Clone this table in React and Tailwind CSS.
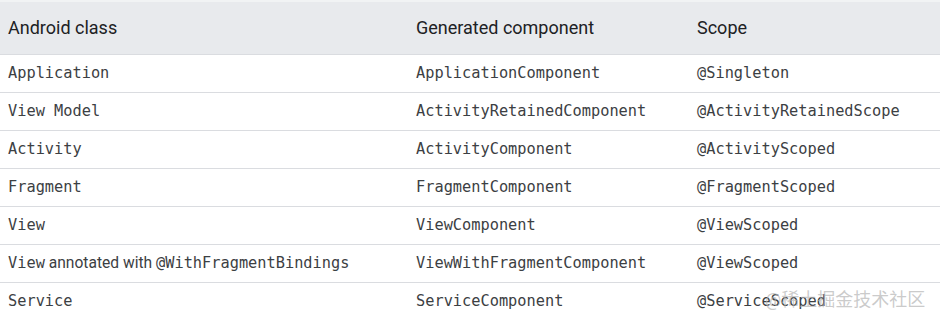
const rows = [
  { cls: "Application", comp: "ApplicationComponent", scope: "@Singleton" },
  { cls: "View Model", comp: "ActivityRetainedComponent", scope: "@ActivityRetainedScope" },
  { cls: "Activity", comp: "ActivityComponent", scope: "@ActivityScoped" },
  { cls: "Fragment", comp: "FragmentComponent", scope: "@FragmentScoped" },
  { cls: "View", comp: "ViewComponent", scope: "@ViewScoped" },
  { cls: "annotated", comp: "ViewWithFragmentComponent", scope: "@ViewScoped" },
  { cls: "Service", comp: "ServiceComponent", scope: "@ServiceScoped" },
];

const mono = "font-['DejaVu_Sans_Mono',monospace] text-[15.3px] text-[#3c4043]";

export default function App() {
  return (
    <div className="relative w-[940px] h-[320px] bg-white font-['Roboto',sans-serif] overflow-hidden">
      <table className="w-full border-collapse">
        <thead>
          <tr className="h-[53px] bg-[#e8eaed] border-t-2 border-[#f1f3f4] border-b border-b-[#dadce0]">
            <th className="w-[408px] pl-2 text-left font-normal text-[18px] text-[#202124]">Android class</th>
            <th className="w-[281px] pl-2 text-left font-normal text-[18px] text-[#202124]">Generated component</th>
            <th className="pl-2 text-left font-normal text-[18px] text-[#202124]">Scope</th>
          </tr>
        </thead>
        <tbody>
          {rows.map((r, i) => (
            <tr key={i} className="h-[38px] border-b border-[#dadce0]">
              <td className="pl-2">
                {r.cls === "annotated" ? (
                  <span className="text-[15.6px] text-[#3c4043]">
                    <span className={mono}>View</span> annotated with{" "}
                    <span className={mono}>@WithFragmentBindings</span>
                  </span>
                ) : (
                  <span className={mono}>{r.cls}</span>
                )}
              </td>
              <td className="pl-2">
                <span className={mono}>{r.comp}</span>
              </td>
              <td className="pl-2">
                <span className={mono}>{r.scope}</span>
              </td>
            </tr>
          ))}
        </tbody>
      </table>
      <div className="absolute left-[765px] top-[288px] whitespace-nowrap text-[18px] leading-[24px] text-[#b4b4b4]/70 font-['Roboto','Noto_Sans_CJK_SC',sans-serif]">
        @稀土掘金技术社区
      </div>
    </div>
  );
}
